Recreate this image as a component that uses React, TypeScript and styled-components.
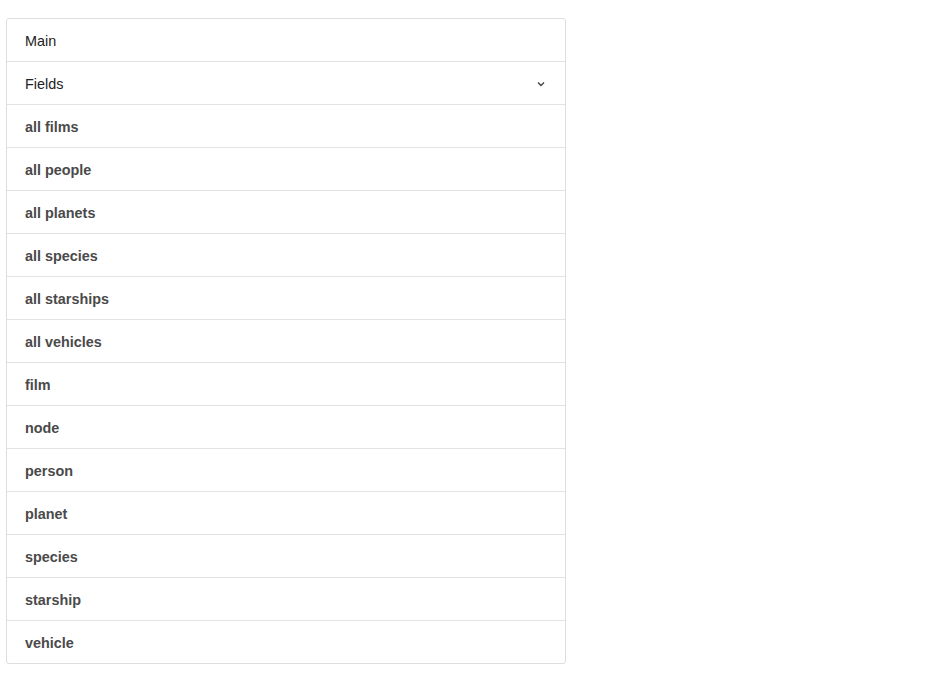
import React from "react";
import styled, { createGlobalStyle } from "styled-components";

const Global = createGlobalStyle`
  html, body { margin: 0; padding: 0; background: #fff; }
  body { font-family: "Liberation Sans", Arial, sans-serif; }
`;

const Page = styled.div`
  padding: 18px 0 0 6px;
`;

const Panel = styled.div`
  width: 560px;
  box-sizing: border-box;
  border: 1px solid #dedede;
  border-radius: 3px;
  display: flex;
  flex-direction: column;
  overflow: hidden;
`;

const Row = styled.div<{ $bold?: boolean }>`
  height: 43px;
  box-sizing: border-box;
  display: flex;
  align-items: center;
  justify-content: space-between;
  padding: 2px 20px 0 18px;
  font-size: 14.4px;
  font-weight: ${(p) => (p.$bold ? 700 : 400)};
  color: ${(p) => (p.$bold ? "#4a4a4a" : "#222")};
  border-bottom: 1px solid #e2e2e2;
  &:last-child { border-bottom: none; height: 42px; }
`;

const Chevron = () => (
  <svg width="8" height="6" viewBox="0 0 8 6">
    <path d="M1 1.5 L4 4.5 L7 1.5" fill="none" stroke="#444" strokeWidth="1.4" />
  </svg>
);

const items = [
  "all films",
  "all people",
  "all planets",
  "all species",
  "all starships",
  "all vehicles",
  "film",
  "node",
  "person",
  "planet",
  "species",
  "starship",
  "vehicle",
];

export default function App() {
  return (
    <>
      <Global />
      <Page>
        <Panel>
          <Row>Main</Row>
          <Row>
            Fields
            <Chevron />
          </Row>
          {items.map((it) => (
            <Row key={it} $bold>
              {it}
            </Row>
          ))}
        </Panel>
      </Page>
    </>
  );
}
